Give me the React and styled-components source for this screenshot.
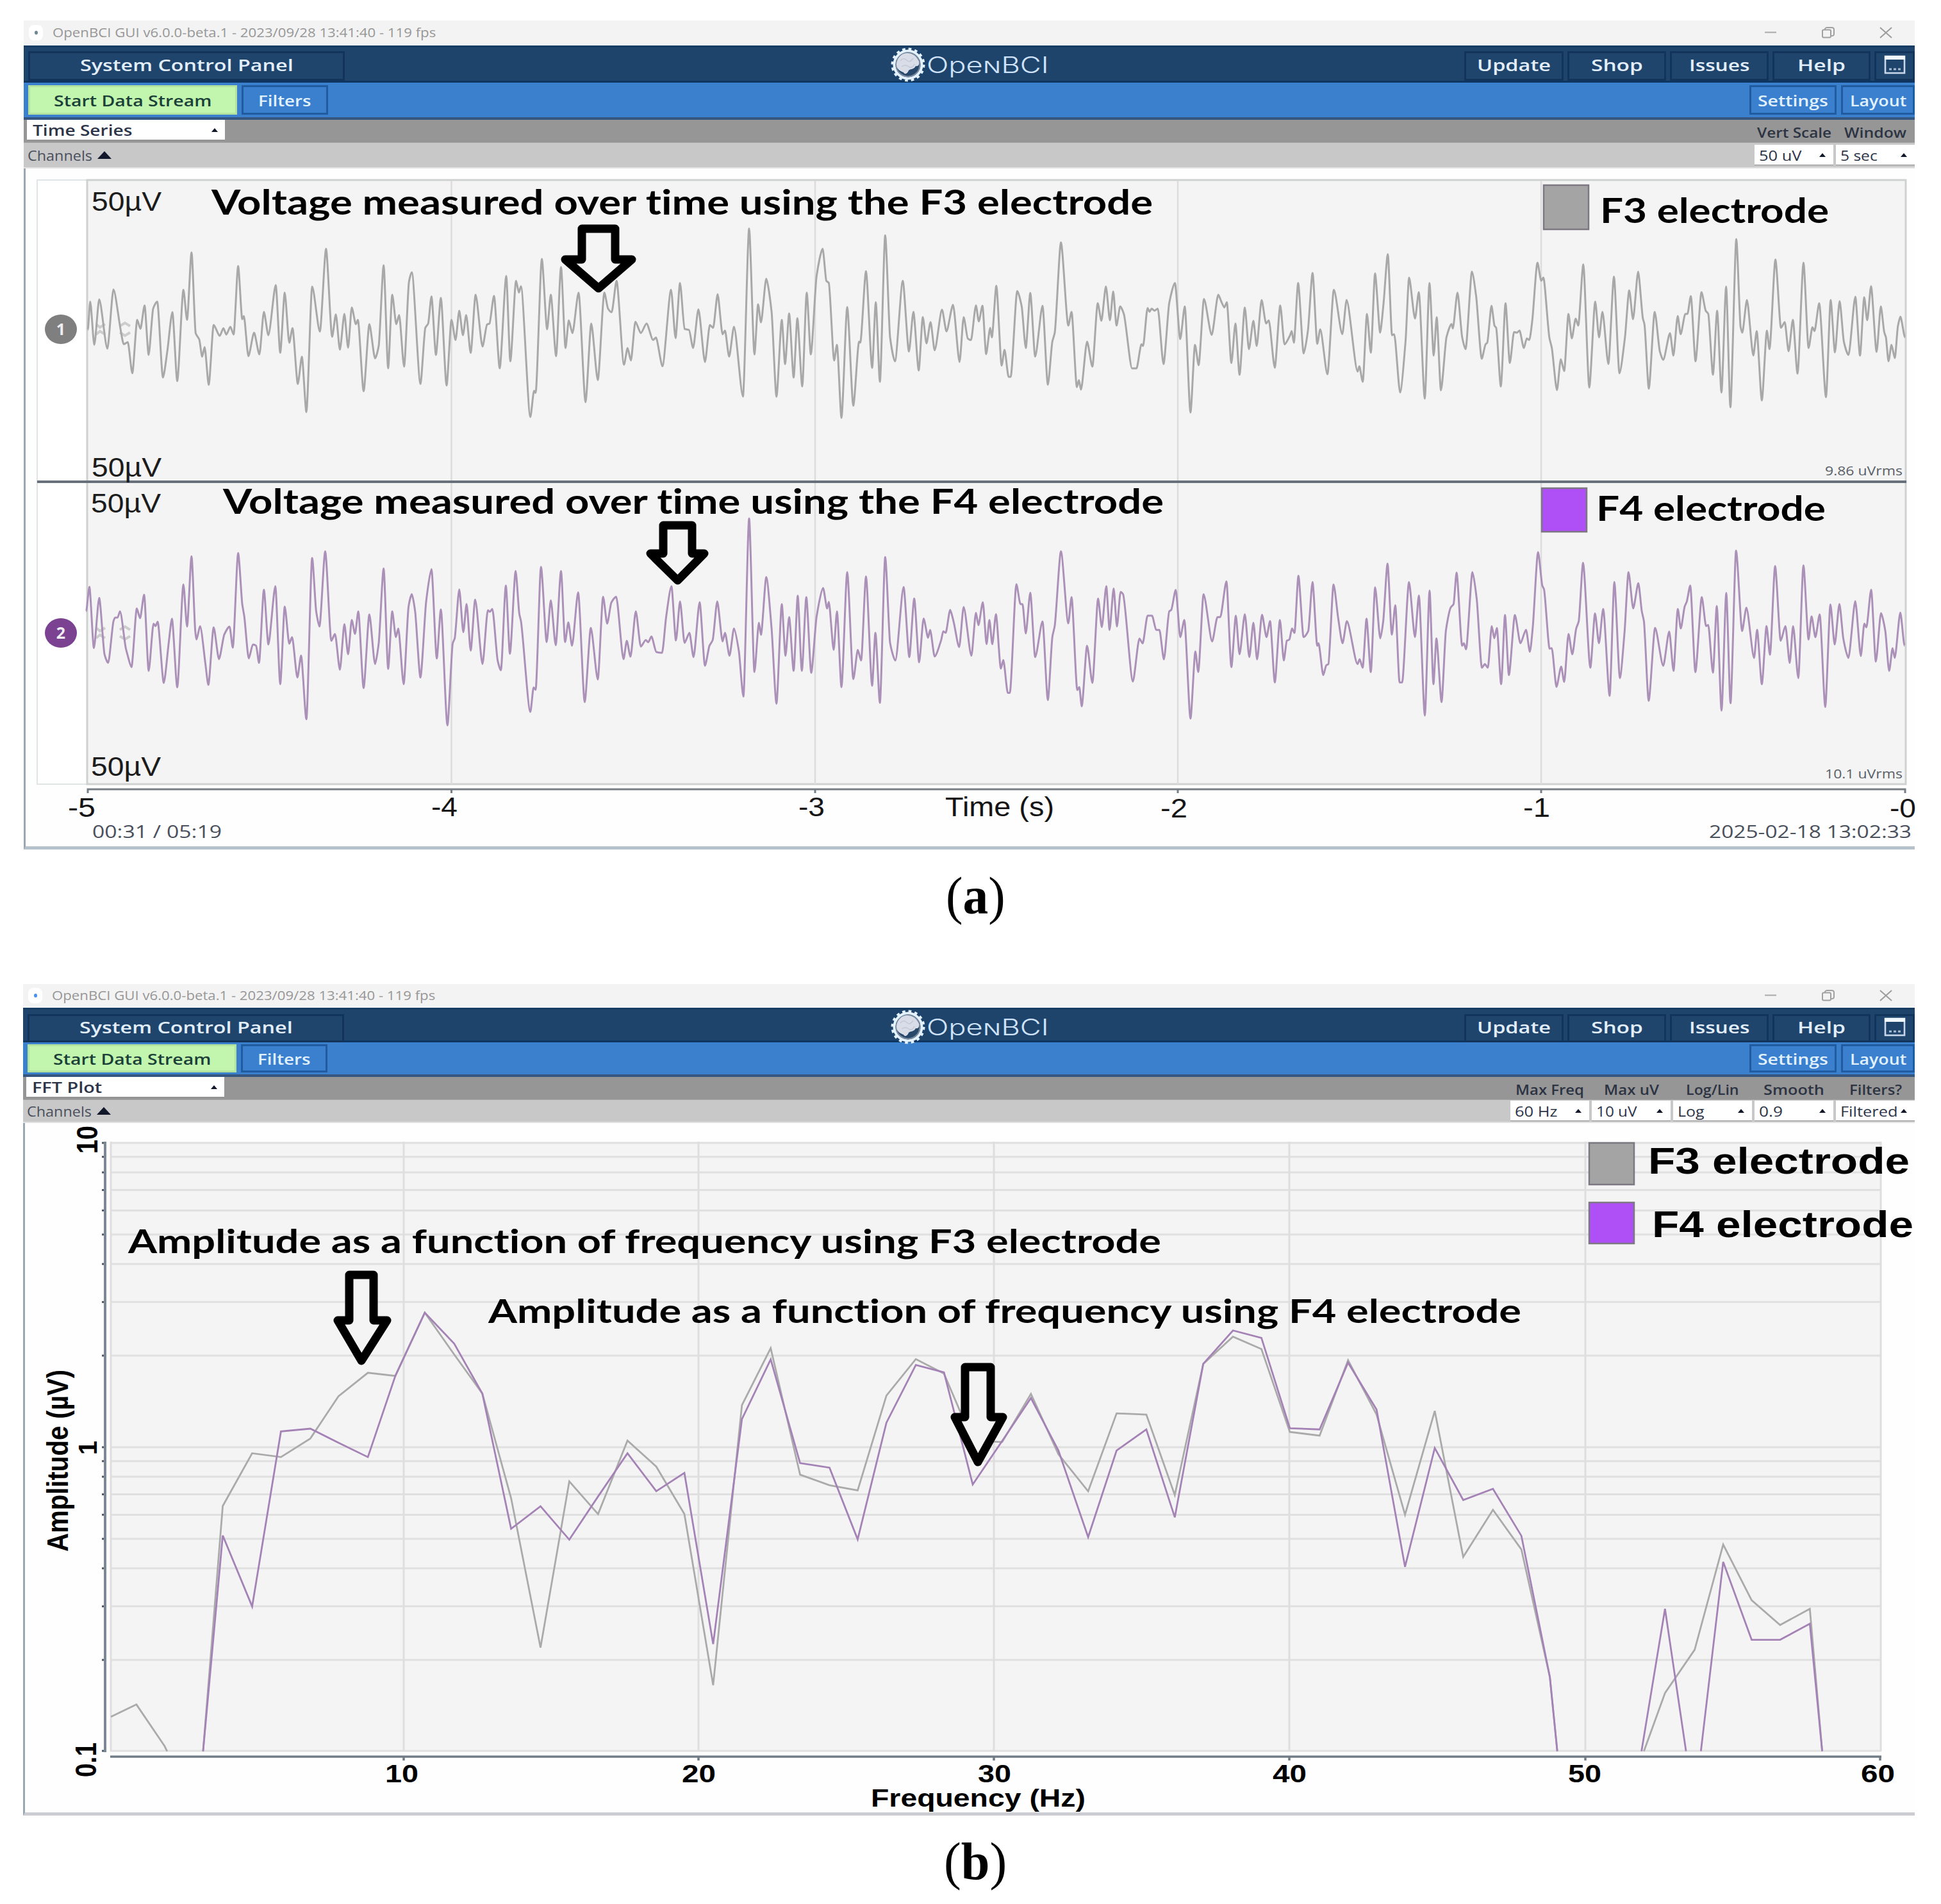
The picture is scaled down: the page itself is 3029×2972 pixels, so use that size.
import { useLayoutEffect, useRef, useState } from 'react';
import styled, { createGlobalStyle } from 'styled-components';

const GlobalStyle = createGlobalStyle`
    * {
        box-sizing: border-box;
    }

    body {
        margin: 0;
        background: #ffffff;
        font-family: 'Open Sans', 'Noto Sans', sans-serif;
    }
`;

const Page = styled.main`
    width: 3029px;
    height: 2972px;
    padding-top: 32px;
    overflow: hidden;
`;

const Figure = styled.figure`
    margin: 0;
    height: ${(props) => props.$height}px;
`;

const Caption = styled.figcaption`
    display: flex;
    justify-content: center;
    padding-top: ${(props) => props.$top}px;
    padding-left: 15px;
    font-family: 'Liberation Serif', serif;
    font-size: 82px;
    line-height: 90px;
    color: #000000;
`;

const Window = styled.section`
    width: ${(props) => 2988 - props.$left}px;
    margin-left: ${(props) => props.$left}px;
`;

const TitleBar = styled.header`
    display: flex;
    align-items: center;
    height: ${(props) => props.$height}px;
    padding: 0 35px 2px 8px;
    background: #f3f3f3;
    color: #979797;
    font-size: 20px;
`;

const AppDot = styled.span`
    display: grid;
    place-items: center;
    width: 22px;
    height: 24px;
    margin-right: 15px;
    border-radius: 8px;
    background: #ffffff;

    &::after {
        content: '';
        width: 5px;
        height: 6px;
        border-radius: 50%;
        background: ${(props) => props.$color};
    }
`;

const WindowButtons = styled.div`
    display: flex;
    align-items: center;
    gap: 70px;
    margin-left: auto;
`;

const NavBar = styled.nav`
    display: grid;
    grid-template-columns: 1fr auto 1fr;
    align-items: center;
    height: ${(props) => props.$height}px;
    padding-left: 7px;
    background: #1f446b;
    border-top: 3px solid #173c62;
    border-bottom: 3px solid #0e3660;
    color: #e3eefb;
    font-size: 26px;
    font-weight: 600;
`;

const NavGroup = styled.div`
    display: flex;
    justify-content: flex-end;
    gap: 6px;
`;

const NavButton = styled.button`
    display: flex;
    align-items: center;
    justify-content: center;
    width: ${(props) => props.$width}px;
    height: ${(props) => props.$height}px;
    padding: 0 0 4px;
    border: 3px solid #12345a;
    background: #20456d;
    color: inherit;
    font: inherit;
`;

const Logo = styled.div`
    display: flex;
    align-items: center;
    gap: 1px;
    padding-right: 7px;
    padding-bottom: 3px;
    color: #cfe3fa;
    font-family: Inter, sans-serif;
    font-size: 35px;
    font-weight: 300;
    font-variant: small-caps;
    line-height: 46px;
`;

const ToolBar = styled.div`
    display: flex;
    align-items: center;
    gap: 7px;
    height: ${(props) => props.$height}px;
    padding-left: 7px;
    background: #3a80cc;
    border-bottom: 4px solid #34567f;
`;

const ToolButton = styled.button`
    display: flex;
    align-items: center;
    justify-content: center;
    width: ${(props) => props.$width}px;
    height: ${(props) => props.$height}px;
    margin-left: ${(props) => (props.$push ? 'auto' : 0)};
    padding: 0;
    border: 3px solid ${(props) => (props.$primary ? '#b3e39f' : '#205b9f')};
    background: ${(props) => (props.$primary ? '#c2f6af' : '#3a80cf')};
    color: ${(props) => (props.$primary ? '#1b4038' : '#e2f1ff')};
    font: 600 24px 'Open Sans', sans-serif;
`;

const WidgetBar = styled.div`
    display: flex;
    height: 36px;
    padding-left: 5px;
    background: #969696;
    border-bottom: 1px solid #a4a4a4;
`;

const SubBar = styled.div`
    display: flex;
    align-items: center;
    height: ${(props) => props.$height}px;
    padding-left: 6px;
    background: #c8c8c8;
    border-bottom: 2px solid #e2e2e2;
    color: #494f5c;
    font-size: 22px;
`;

const Select = styled.div`
    display: flex;
    align-items: center;
    justify-content: space-between;
    width: ${(props) => props.$width}px;
    height: ${(props) => props.$height}px;
    padding: 0 ${(props) => (props.$main ? 11 : 12)}px 0 ${(props) => (props.$main ? 9 : 7)}px;
    background: #ffffff;
    border-bottom: 1px solid #8d8d8d;
    color: #2c3448;
    font-size: ${(props) => (props.$main ? 23 : 22)}px;
    font-weight: ${(props) => (props.$main ? 600 : 500)};
`;

const Columns = styled.div`
    display: flex;
    align-items: center;
    gap: 4px;
    height: 100%;
    margin-left: auto;
`;

const ColumnLabel = styled.div`
    display: flex;
    justify-content: center;
    width: 123px;
    padding-top: 5px;
    color: #2c3342;
    font-size: 21px;
    font-weight: 600;
`;

const Caret = styled.i`
    flex: none;
    width: 0;
    height: 0;
    margin-left: ${(props) => props.$gap || 0}px;
    border: solid transparent;
    border-width: 0 ${(props) => props.$size}px ${(props) => props.$size + 1}px;
    border-bottom-color: #10182a;
`;

const Content = styled.div`
    height: ${(props) => props.$height}px;
    background: #fefefe;
    border-left: 3px solid #9aa6b4;
    border-bottom: 5px solid ${(props) => props.$edge};
`;

const Chart = styled.svg`
    display: block;
    width: 100%;
    height: 100%;
    overflow: visible;
    font-variant-ligatures: none;
`;

const FitBox = styled.span`
    display: block;
    flex: none;
    width: ${(props) => props.$width}px;
    text-align: left;
    white-space: nowrap;
`;

const FitText = styled.span`
    display: inline-block;
    transform-origin: left center;
`;

// stretches its text to an exact width, whatever the font's own metrics are
const Fit = ({ width, children }) => {
    const ref = useRef(null);
    const [scale, setScale] = useState(1);

    useLayoutEffect(() => {
        setScale(width / ref.current.offsetWidth);
    }, [width]);

    return (
        <FitBox $width={width}>
            <FitText ref={ref} style={{ transform: `scaleX(${scale})` }}>
                {children}
            </FitText>
        </FitBox>
    );
};

// Each trace is digitised in chunks: origin, scale and "x,y" pairs.
const toPoints = (chunks) =>
    chunks.flatMap(({ x0, y0, kx, ky, data }) =>
        data
            .trim()
            .split(/\s+/)
            .map((pair) => {
                const [x, y] = pair.split(',').map(Number);
                return [x0 + x / kx, y0 + y / ky];
            })
    );

const toLine = (chunks) =>
    toPoints(chunks)
        .map(([x, y]) => `${x.toFixed(1)},${y.toFixed(1)}`)
        .join(' ');

// flat tangent on the peaks, mean slope everywhere else
const toWave = (chunks) => {
    const points = toPoints(chunks);
    const slopes = points.map(([x, y], i) => {
        const prev = points[i - 1];
        const next = points[i + 1];

        if (!prev || !next || (y - prev[1]) * (next[1] - y) <= 0) return 0;

        const a = (y - prev[1]) / (x - prev[0]);
        const b = (next[1] - y) / (next[0] - x);

        return (2 * a * b) / (a + b);
    });

    return points
        .map(([x, y], i) => {
            if (i === 0) return `M${x.toFixed(1)} ${y.toFixed(1)}`;

            const [px, py] = points[i - 1];
            const h = (x - px) * 0.24;

            return (
                `C${(px + h).toFixed(1)} ${(py + slopes[i - 1] * h).toFixed(1)} ` +
                `${(x - h).toFixed(1)} ${(y - slopes[i] * h).toFixed(1)} ${x.toFixed(1)} ${y.toFixed(1)}`
            );
        })
        .join('');
};

const F3_TRACE = [
    {
        x0: 40, y0: 260, kx: 1.568, ky: 3,
        data: `152,765 158,632 168,835 180,622 200,853 215,575 232,760 240,832 250,822 261,968 273,718 281,760
        291,650 301,882 312,665 322,632 336,988 347,860 359,682 371,1005 386,577 395,718 406,402 416,780 425,810
        432,890 438,845 448,1022 460,742 475,793 484,757 491,787 501,750 509,787 520,466 530,715 534,700 545,888
        559,778 572,880 583,680 594,790 612,555 623,872 634,590 645,825 653,757 666,1018 676,890 687,1150 701,562
        720,773 735,385 750,797 759,692 769,857 780,690 789,848 798,660 808,738 813,718 827,1052 841,738 855,898
        864,840 876,462 887,945 897,600 907,738 914,695 926,937 938,540 945,495 966,1018 978,755 985,735 993,608
        1004,882 1016,615 1030,1025 1042,718 1052,812 1061,675 1070,790 1078,695 1089,872 1101,600 1118,843
        1129,740 1135,735 1146,605 1160,945 1176,512 1186,912 1200,535 1207,590 1212,560 1235,1173 1244,1050
        1248,1060 1263,432 1276,762 1285,600 1298,888 1310,470 1321,850 1329,720 1338,780 1353,590 1370,1103
        1384,735 1400,1000 1416,590 1425,665 1434,682 1446,535 1464,928 1473,850 1481,908 1492,727`,
    },
    {
        x0: 1000, y0: 260, kx: 1.568, ky: 3,
        data: `0,780 14,735 30,812 37,800 53,935 74,577 85,803 96,545 107,760 118,765 128,850 141,668 157,915
        169,742 177,755 188,598 200,785 206,768 216,890 228,750 250,1077 265,290 278,880 287,645 294,730 307,525
        320,680 332,1078 345,718 353,925 363,688 374,988 383,710 395,1030 406,590 416,880 430,515 445,385 454,535
        460,545 473,908 480,835 491,1177 505,658 520,1120 534,820 537,825 551,490 566,943 575,635 585,1008 598,322
        610,800 622,912 641,535 656,866 667,680 680,955 690,705 699,828 709,728 719,860 737,670 748,772 764,647
        780,915 790,705 800,805 808,812 820,650 827,725 836,652 845,878 855,755 859,800 870,558 883,932 890,858
        900,985 905,985 921,583 932,655 942,850 953,592 965,890 983,652 996,1022 1007,820 1013,778 1028,355
        1046,745 1054,680 1067,1033 1072,1000 1077,1045 1092,820 1105,937 1118,640 1127,722 1138,562 1148,720
        1156,585 1164,745 1173,655 1182,690 1202,945 1213,945 1225,832 1229,840 1240,662 1245,680 1250,665
        1257,675 1265,665 1279,925 1293,640 1307,545 1320,808 1331,655 1345,1152 1356,835 1365,930 1378,620
        1397,788 1413,600 1420,630 1428,660 1434,635 1445,920 1455,735 1465,975 1478,660 1488,855 1499,722
        1507,840 1519,625 1530,735`,
    },
    {
        x0: 1980, y0: 260, kx: 1.5077, ky: 3,
        data: `0,720 14,942 27,650 37,833 50,790 54,770 59,825 69,545 82,875 92,770 103,498 114,830 121,762
        138,973 153,577 173,785 183,625 209,960 213,935 221,1008 231,690 240,872 250,500 262,778 270,640 280,410
        290,790 295,785 309,1058 322,810 330,520 344,712 353,588 367,1087 378,545 388,885 395,705 405,1048 418,800
        430,737 433,758 444,590 455,800 463,855 478,492 488,610 501,900 510,832 514,825 524,652 531,745 535,755
        546,1030 557,640 567,920 577,775 584,778 590,768 600,850 607,805 613,812 620,720 632,450 641,535 646,520
        660,800 666,850 678,1047 687,902 695,958 705,690 713,805 722,712 728,745 740,458 754,1035 768,632 777,800
        785,680 799,925 812,515 825,968 838,800 848,580 857,715 869,492 880,710 884,740 894,1040 908,680 920,865
        928,905 944,780 952,885 962,700 969,785 980,690 985,690 993,607 1004,912 1018,588 1028,675 1034,690
        1045,975 1055,675 1065,1058 1076,562 1086,1127 1100,340 1110,750 1114,778 1125,625 1140,885 1148,770
        1160,1095 1172,768 1178,855 1192,435 1205,755 1214,728 1223,865 1233,718 1244,970 1258,450 1270,850
        1279,752 1284,770 1295,640 1311,1080 1322,625 1332,870 1343,630 1353,820 1364,882 1380,610 1391,885
        1401,612 1408,720 1417,560 1430,868 1440,655 1448,775 1452,800 1458,912 1465,835 1473,897 1480,750
        1486,703 1497,800`,
    },
];

const F4_TRACE = [
    {
        x0: 40, y0: 740, kx: 1.568, ky: 2.613,
        data: `148,560 156,460 167,710 180,505 193,735 202,770 215,600 219,585 225,585 231,560 245,710 249,735
        259,787 272,548 280,588 290,492 301,803 313,610 318,620 323,602 338,852 350,690 358,590 371,870 386,450
        395,622 406,335 415,640 418,675 427,620 440,775 447,860 460,625 473,755 486,655 499,622 507,708 520,322
        530,530 535,580 546,752 556,695 564,700 571,770 583,472 594,695 611,457 623,857 634,540 645,692 652,665
        665,830 674,740 687,1000 701,342 711,560 719,622 733,315 748,680 757,652 769,798 780,612 789,735 798,595
        806,652 814,560 827,873 841,572 855,775 864,690 876,385 887,795 897,560 906,665 912,630 925,857 937,540
        945,490 953,560 966,830 980,520 993,388 1006,752 1016,552 1032,1025 1045,690 1050,670 1061,470 1071,645
        1079,530 1089,720 1100,512 1118,775 1131,555 1136,562 1142,550 1155,760 1163,800 1175,455 1185,733
        1199,395 1208,570 1212,600 1235,970 1243,870 1248,880 1261,378 1275,685 1285,515 1297,698 1310,395
        1320,685 1328,605 1337,700 1352,482 1368,930 1383,627 1400,838 1413,500 1423,610 1433,525 1445,500
        1463,755 1471,680 1480,745 1493,560`,
    },
    {
        x0: 1000, y0: 740, kx: 1.568, ky: 2.24,
        data: `0,603 12,580 18,588 26,568 38,622 52,625 62,500 75,392 86,582 96,445 107,590 119,555 129,640
        144,448 157,670 168,600 176,580 187,445 200,585 206,555 217,635 228,540 240,620 251,778 265,155 278,692
        289,520 294,562 307,360 320,540 332,803 345,455 354,635 363,500 374,688 384,425 394,688 405,430 417,695
        430,500 446,398 456,470 460,447 472,615 480,480 491,745 505,343 520,717 531,615 539,652 551,358 566,740
        574,555 585,800 598,290 610,590 623,652 643,395 657,640 669,435 681,658 692,505 703,572 708,545 719,638
        735,580 740,550 746,555 757,475 766,520 779,605 790,465 809,635 820,485 826,528 837,448 846,595 853,510
        860,595 869,490 881,680 887,650 898,765 903,765 919,385 929,455 934,455 942,557 953,415 965,640 983,515
        996,790 1007,570 1013,530 1028,270 1046,522 1054,430 1068,755 1073,745 1079,812 1092,600 1105,730
        1119,435 1128,535 1139,392 1147,545 1157,400 1165,533 1174,412 1180,420 1204,725 1220,575 1228,592
        1240,495 1251,495 1261,545 1269,545 1280,648 1293,480 1298,475 1309,405 1320,570 1330,510 1345,855
        1357,620 1364,692 1377,420 1398,585 1411,500 1418,500 1433,375 1445,675 1456,495 1465,630 1478,490
        1489,640 1499,520 1508,648 1520,492 1531,570`,
    },
    {
        x0: 1980, y0: 740, kx: 1.4947, ky: 2.613,
        data: `3,600 14,850 26,595 35,760 42,680 48,675 54,630 60,648 69,415 81,665 92,640 102,440 113,700
        116,690 127,820 134,780 139,775 151,450 162,590 172,690 182,600 207,775 212,755 219,790 228,590 238,808
        248,462 260,670 267,600 277,365 287,655 295,535 305,850 311,850 327,440 341,665 350,495 364,985 375,475
        384,857 391,670 403,930 413,640 424,545 431,530 438,402 451,700 455,690 460,715 475,400 485,510 497,790
        504,775 511,790 520,620 526,670 532,628 542,857 551,575 560,820 574,575 587,690 600,635 609,725 616,620
        628,318 638,455 642,470 655,712 660,710 671,868 682,785 689,848 699,652 708,735 717,630 723,600 733,362
        750,790 761,568 770,690 780,550 795,905 806,440 819,832 830,640 839,400 850,548 862,445 870,560 875,600
        886,925 901,627 920,782 934,642 944,803 954,550 961,630 970,540 975,520 983,455 995,808 1010,502 1020,620
        1025,615 1036,810 1045,538 1056,965 1067,485 1077,935 1090,312 1104,640 1114,545 1132,750 1139,635
        1150,857 1161,620 1169,737 1181,375 1194,680 1205,620 1215,770 1223,620 1235,832 1247,372 1259,675
        1266,580 1275,665 1285,572 1298,950 1310,532 1320,695 1331,530 1340,670 1352,750 1368,518 1381,742
        1389,610 1394,625 1405,472 1416,765 1428,567 1438,640 1447,803 1455,710 1460,750 1473,565 1483,700`,
    },
];

const LOW = { x0: 20, y0: 2100, kx: 0.98, ky: 1.823 };
const HIGH = { x0: 0, y0: 0, kx: 0.51765, ky: 0.51765 };

// one entry per visible run, the gaps are below 0.1 uV
const F3_SPECTRUM = [
    [{ ...LOW, data: '150,1057 189,1022 232,1140 236,1155' }],
    [
        {
            ...LOW,
            data: `291,1155 321,457 366,307 410,318 455,265 498,145 543,78 585,87 630,-93 675,26 718,137 762,435
            807,860 851,387 895,480 940,271 984,345 1027,480 1071,967 1115,170 1159,8 1204,368 1249,398 1292,413
            1336,143 1381,39 1424,80 1468,272 1513,275 1557,138`,
        },
        {
            ...HIGH,
            data: `855,1175 879,1205 902,1142 926,1143 949,1208 972,1102 996,1080 1019,1090 1042,1157 1066,1160
            1089,1099 1112,1143 1135,1224 1159,1140 1182,1258 1206,1220 1229,1252 1252,1355 1258,1415`,
        },
    ],
    [{ ...HIGH, data: '1328,1415 1345,1368 1369,1333 1392,1248 1415,1293 1438,1313 1462,1300 1472,1415' }],
];

const F4_SPECTRUM = [
    [
        {
            ...LOW,
            data: `291,1155 321,541 366,743 410,245 455,237 498,277 543,318 585,87 630,-93 675,-5 718,137 762,522
            807,458 851,553 895,430 940,307 984,415 1027,363 1071,850 1115,210 1159,40 1204,335 1249,348 1292,552
            1336,220 1381,56 1424,77 1468,396 1513,272 1557,150`,
        },
        {
            ...HIGH,
            data: `855,1172 879,1242 902,1172 926,1155 949,1226 972,1102 996,1075 1019,1081 1042,1154 1066,1155
            1089,1101 1112,1139 1135,1266 1159,1170 1182,1212 1206,1203 1229,1241 1252,1355 1258,1415`,
        },
    ],
    [{ ...HIGH, data: '1326,1415 1345,1300 1362,1415' }],
    [{ ...HIGH, data: '1374,1415 1392,1262 1415,1325 1438,1325 1462,1312 1472,1415' }],
];

const SANS = "'Liberation Sans', Arial, sans-serif";
const NOTE = 'Lato, Carlito, sans-serif';
const GUI = "'Open Sans', sans-serif";

const Text = ({ x1, x2, y, size, font = SANS, weight = 400, fill = '#000000', children }) => (
    <text
        x={x1}
        y={y}
        fontFamily={font}
        fontSize={size}
        fontWeight={weight}
        fill={fill}
        textLength={x2 - x1}
        lengthAdjust="spacingAndGlyphs"
    >
        {children}
    </text>
);

const Note = styled(Text).attrs({ font: NOTE, weight: 700 })``;

// text that reads upwards, from y1 (bottom) to y2 (top), x is its baseline
const UpText = ({ x, y1, y2, size, children }) => (
    <g transform={`translate(${x} ${y1}) rotate(-90)`}>
        <Text x1={0} x2={y1 - y2} y={0} size={size} weight={700}>
            {children}
        </Text>
    </g>
);

const Arrow = ({ left, right, top, headLeft, headRight, headTop, tip }) => (
    <path
        d={`M${left} ${top}H${right}V${headTop}H${headRight}L${(left + right) / 2} ${tip}L${headLeft} ${headTop}H${left}Z`}
        fill="#f4f4f4"
        stroke="#000000"
        strokeWidth="13"
        strokeLinejoin="round"
    />
);

const Swatch = ({ x, y, height, fill }) => (
    <rect x={x + 1} y={y + 1} width="70" height={height - 2} fill={fill} stroke="#7c7780" strokeWidth="2.5" />
);

const Badge = ({ y, fill, children }) => (
    <g>
        <ellipse cx="95" cy={y} rx="25" ry="23" fill={fill} />
        <text
            x="95"
            y={y + 9}
            textAnchor="middle"
            fontFamily={GUI}
            fontSize="25"
            fontWeight="700"
            fill="#f1eef3"
        >
            {children}
        </text>
        <g stroke="#bdbdbd" strokeWidth="4" fill="none" opacity="0.7">
            <path d={`M150 ${y - 8}l6 5l8 -5M150 ${y + 8}l6 -5l8 5`} />
            <path d={`M187 ${y - 5}l8 -5l8 5M187 ${y + 5}l8 5l8 -5`} />
        </g>
    </g>
);

const TimeSeriesChart = () => (
    <Chart viewBox="40 263 2948 1058" preserveAspectRatio="none">
        <rect x="58" y="281" width="78" height="943" fill="#ffffff" stroke="#dfe4e6" strokeWidth="2" />
        <rect x="136" y="281" width="2838" height="943" fill="#f4f4f4" stroke="#cfd1d1" strokeWidth="3" />
        {[704.5, 1272, 1838, 2405].map((x) => (
            <line key={x} x1={x} x2={x} y1="282" y2="1224" stroke="#dcdcdc" strokeWidth="2.5" />
        ))}
        <Badge y={514} fill="#7f7f7f">1</Badge>
        <Badge y={988} fill="#7b4292">2</Badge>
        <path d={toWave(F3_TRACE)} fill="none" stroke="#a8a8a8" strokeWidth="3" />
        <path d={toWave(F4_TRACE)} fill="none" stroke="#ab90b8" strokeWidth="3" />
        <line x1="58" x2="2975" y1="752" y2="752" stroke="#68717b" strokeWidth="4" />
        <path d="M137 1238V1232H2973V1238M704.5 1232v6M1272 1232v6M1838 1232v6M2405 1232v6" fill="none" stroke="#767d83" strokeWidth="3" />

        <Text x1={143} x2={252} y={329} size={43} fill="#1c1c1c">50µV</Text>
        <Text x1={143} x2={252} y={744} size={43} fill="#1c1c1c">50µV</Text>
        <Text x1={142} x2={251} y={800} size={43} fill="#1c1c1c">50µV</Text>
        <Text x1={142} x2={251} y={1211} size={43} fill="#1c1c1c">50µV</Text>
        <Text x1={2848} x2={2969} y={742} size={20} font={GUI} fill="#596068">9.86 uVrms</Text>
        <Text x1={2848} x2={2969} y={1215} size={20} font={GUI} fill="#596068">10.1 uVrms</Text>

        <Note x1={330} x2={1799} y={335} size={54}>
            Voltage measured over time using the F3 electrode
        </Note>
        <Note x1={348} x2={1816} y={802} size={53}>
            Voltage measured over time using the F4 electrode
        </Note>
        <Arrow left={908} right={960} top={357} headLeft={882} headRight={986} headTop={405} tip={450} />
        <Arrow left={1035} right={1080} top={820} headLeft={1015} headRight={1099} headTop={864} tip={906} />
        <Swatch x={2408} y={288} height={71} fill="#a4a4a4" />
        <Note x1={2497} x2={2854} y={348} size={54}>F3 electrode</Note>
        <Swatch x={2405} y={761} height={70} fill="#ae50f5" />
        <Note x1={2491} x2={2849} y={813} size={53}>F4 electrode</Note>

        <Text x1={106} x2={149} y={1275} size={42} fill="#151515">-5</Text>
        <Text x1={673} x2={714} y={1274} size={42} fill="#151515">-4</Text>
        <Text x1={1246} x2={1287} y={1274} size={42} fill="#151515">-3</Text>
        <Text x1={1475} x2={1645} y={1274} size={42} fill="#151515">Time (s)</Text>
        <Text x1={1811} x2={1853} y={1276} size={42} fill="#151515">-2</Text>
        <Text x1={2377} x2={2419} y={1275} size={42} fill="#151515">-1</Text>
        <Text x1={2949} x2={2990} y={1276} size={42} fill="#151515">-0</Text>
        <Text x1={144} x2={346} y={1308} size={28} font={GUI} weight={500} fill="#4a505c">00:31 / 05:19</Text>
        <Text x1={2667} x2={2983} y={1308} size={28} font={GUI} weight={500} fill="#4a505c">2025-02-18 13:02:33</Text>
    </Chart>
);

const PLOT_TOP = 1784;
const DECADE = 475;

const logLines = [0, 1].flatMap((decade) =>
    [10, 9, 8, 7, 6, 5, 4, 3, 2].map((k) => PLOT_TOP + DECADE * (decade + 1 - Math.log10(k)))
);

const FftChart = () => (
    <Chart viewBox="39 1753 2949 1076" preserveAspectRatio="none">
        <rect x="172" y="1782" width="2763" height="952" fill="#f4f4f4" />
        {[...logLines, 2733].map((y) => (
            <g key={y}>
                <line x1="172" x2="2935" y1={y} y2={y} stroke="#e0e0e0" strokeWidth="3" />
                <line x1="159" x2="164" y1={y} y2={y} stroke="#4c5866" strokeWidth="3" />
            </g>
        ))}
        {[173, 630, 1090, 1551, 2012, 2474, 2935].map((x) => (
            <line key={x} x1={x} x2={x} y1="1782" y2="2734" stroke="#dedede" strokeWidth="3" />
        ))}
        <line x1="164" x2="164" y1="1782" y2="2735" stroke="#7d8896" strokeWidth="4" />
        <path d="M172 2742H2936M630 2742v6M1090 2742v6M1551 2742v6M2012 2742v6M2474 2742v6M2934 2742v6" fill="none" stroke="#717c86" strokeWidth="3.5" />

        {F3_SPECTRUM.map((run, i) => (
            <polyline key={i} points={toLine(run)} fill="none" stroke="#aaaaaa" strokeWidth="2.8" />
        ))}
        {F4_SPECTRUM.map((run, i) => (
            <polyline key={i} points={toLine(run)} fill="none" stroke="#a482b6" strokeWidth="2.8" />
        ))}

        <Note x1={200} x2={1812} y={1956} size={52}>
            Amplitude as a function of frequency using F3 electrode
        </Note>
        <Note x1={762} x2={2374} y={2065} size={52}>
            Amplitude as a function of frequency using F4 electrode
        </Note>
        <Arrow left={545} right={583} top={1990} headLeft={527} headRight={604} headTop={2061} tip={2124} />
        <Arrow left={1506} right={1546} top={2134} headLeft={1490} headRight={1565} headTop={2212} tip={2282} />
        <Swatch x={2479} y={1783} height={67} fill="#a4a4a4" />
        <Text x1={2572} x2={2980} y={1832} size={57} weight={700}>F3 electrode</Text>
        <Swatch x={2479} y={1876} height={66} fill="#ae50f5" />
        <Text x1={2578} x2={2986} y={1931} size={57} weight={700}>F4 electrode</Text>

        <UpText x={152} y1={1801} y2={1757} size={46}>10</UpText>
        <UpText x={151} y1={2271} y2={2249} size={40}>1</UpText>
        <UpText x={150} y1={2774} y2={2720} size={46}>0.1</UpText>
        <UpText x={106} y1={2422} y2={2138} size={46}>Amplitude (µV)</UpText>

        <Text x1={601} x2={653} y={2782} size={39} weight={700}>10</Text>
        <Text x1={1064} x2={1117} y={2782} size={39} weight={700}>20</Text>
        <Text x1={1526} x2={1578} y={2782} size={39} weight={700}>30</Text>
        <Text x1={1986} x2={2039} y={2782} size={39} weight={700}>40</Text>
        <Text x1={2447} x2={2499} y={2782} size={39} weight={700}>50</Text>
        <Text x1={2904} x2={2957} y={2782} size={39} weight={700}>60</Text>
        <Text x1={1359} x2={1694} y={2820} size={38} weight={700}>Frequency (Hz)</Text>
    </Chart>
);

const GearIcon = () => (
    <svg width="56" height="54" viewBox="-28 -27 56 54">
        <circle r="21.5" fill="#28486b" stroke="#e4f2ff" strokeWidth="4" />
        <circle r="24.5" fill="none" stroke="#e4f2ff" strokeWidth="4" strokeDasharray="4.6 5.02" />
        <circle r="18.5" fill="none" stroke="#7a8b9e" strokeWidth="2" />
        <path
            d="M-18 0C-18 -8 -12 -17 -3 -18C7 -19 14 -13 17 -5C18 0 16 3 12 2C9 8 4 6 1 9C-1 14 -5 16 -7 12C-12 10 -18 7 -18 0Z"
            fill="#d8dde8"
        />
        <path d="M-12 -6q5 -6 10 -1t10 -3M-10 3q6 -4 11 0t9 -4" fill="none" stroke="#c3c9d6" strokeWidth="1.5" />
    </svg>
);

const PanelIcon = () => (
    <svg width="34" height="30" viewBox="0 0 34 30">
        <rect x="2" y="2" width="30" height="26" fill="none" stroke="#c8d8ea" strokeWidth="2.6" />
        <rect x="1" y="1" width="32" height="6" fill="#f2f8ff" />
        <path d="M8 22h4M15 22h4M22 22h4" stroke="#a9bdd4" strokeWidth="3" />
    </svg>
);

const TitleButtons = () => (
    <WindowButtons>
        <svg width="20" height="18" viewBox="0 0 20 18">
            <path d="M1 8.5h18" stroke="#a9a9a9" strokeWidth="2" />
        </svg>
        <svg width="20" height="18" viewBox="0 0 20 18" fill="none" stroke="#a0a0a0" strokeWidth="2">
            <rect x="1" y="4.5" width="13" height="12" rx="2" />
            <path d="M5 4V3q1 -2 3 -2h7q4 0 4 3v7q0 3 -4 3" />
        </svg>
        <svg width="20" height="18" viewBox="0 0 20 18">
            <path d="M1 1l18 16M19 1L1 17" stroke="#9c9c9c" strokeWidth="2" />
        </svg>
    </WindowButtons>
);

const GuiWindow = (props) => {
    const {
        left,
        dot,
        edge,
        widget,
        widgetWidth,
        columns,
        sizes,
        children,
    } = props;

    return (
        <Window $left={left}>
            <TitleBar $height={sizes.title}>
                <AppDot $color={dot} />
                <Fit width={598}>OpenBCI GUI v6.0.0-beta.1 - 2023/09/28 13:41:40 - 119 fps</Fit>
                <TitleButtons />
            </TitleBar>
            <NavBar $height={sizes.nav}>
                <NavButton $width={494} $height={sizes.navButton}>
                    <Fit width={333}>System Control Panel</Fit>
                </NavButton>
                <Logo>
                    <GearIcon />
                    <Fit width={190}>OpenBCI</Fit>
                </Logo>
                <NavGroup>
                    <NavButton $width={155} $height={sizes.navButton}>
                        <Fit width={115}>Update</Fit>
                    </NavButton>
                    <NavButton $width={154} $height={sizes.navButton}>
                        <Fit width={81}>Shop</Fit>
                    </NavButton>
                    <NavButton $width={154} $height={sizes.navButton}>
                        <Fit width={94}>Issues</Fit>
                    </NavButton>
                    <NavButton $width={153} $height={sizes.navButton}>
                        <Fit width={75}>Help</Fit>
                    </NavButton>
                    <NavButton $width={63} $height={sizes.navButton}>
                        <PanelIcon />
                    </NavButton>
                </NavGroup>
            </NavBar>
            <ToolBar $height={sizes.tool}>
                <ToolButton $primary $width={326} $height={sizes.toolButton}>
                    <Fit width={247}>Start Data Stream</Fit>
                </ToolButton>
                <ToolButton $width={135} $height={sizes.toolButton}>
                    <Fit width={83}>Filters</Fit>
                </ToolButton>
                <ToolButton $push $width={136} $height={sizes.toolButton}>
                    <Fit width={110}>Settings</Fit>
                </ToolButton>
                <ToolButton $width={115} $height={sizes.toolButton}>
                    <Fit width={88}>Layout</Fit>
                </ToolButton>
            </ToolBar>
            <WidgetBar>
                <Select $main $width={309} $height={32}>
                    <Fit width={widgetWidth}>{widget}</Fit>
                    <Caret $size={5} />
                </Select>
                <Columns>
                    {columns.map((column) => (
                        <ColumnLabel key={column.label}>
                            <Fit width={column.labelWidth}>{column.label}</Fit>
                        </ColumnLabel>
                    ))}
                </Columns>
            </WidgetBar>
            <SubBar $height={sizes.sub}>
                <Fit width={101}>Channels</Fit>
                <Caret $size={11} $gap={8} />
                <Columns>
                    {columns.map((column) => (
                        <Select key={column.label} $width={123} $height={32}>
                            <Fit width={column.valueWidth}>{column.value}</Fit>
                            <Caret $size={5} />
                        </Select>
                    ))}
                </Columns>
            </SubBar>
            <Content $height={sizes.content} $edge={edge}>
                {children}
            </Content>
        </Window>
    );
};

const TIME_COLUMNS = [
    { label: 'Vert Scale', labelWidth: 116, value: '50 uV', valueWidth: 66 },
    { label: 'Window', labelWidth: 97, value: '5 sec', valueWidth: 58 },
];

const FFT_COLUMNS = [
    { label: 'Max Freq', labelWidth: 107, value: '60 Hz', valueWidth: 66 },
    { label: 'Max uV', labelWidth: 86, value: '10 uV', valueWidth: 63 },
    { label: 'Log/Lin', labelWidth: 83, value: 'Log', valueWidth: 42 },
    { label: 'Smooth', labelWidth: 95, value: '0.9', valueWidth: 37 },
    { label: 'Filters?', labelWidth: 82, value: 'Filtered', valueWidth: 89 },
];

const TIME_SIZES = { title: 39, nav: 58, navButton: 46, tool: 58, toolButton: 46, sub: 40, content: 1063 };
const FFT_SIZES = { title: 37, nav: 54, navButton: 44, tool: 54, toolButton: 44, sub: 36, content: 1081 };

export default function App() {
    return (
        <>
            <GlobalStyle />
            <Page>
                <Figure $height={1504}>
                    <GuiWindow
                        left={37}
                        dot="#6d8794"
                        edge="#b6c2cb"
                        widget="Time Series"
                        widgetWidth={155}
                        columns={TIME_COLUMNS}
                        sizes={TIME_SIZES}
                    >
                        <TimeSeriesChart />
                    </GuiWindow>
                    <Caption $top={28}>
                        <Fit width={93}>
                            (<b>a</b>)
                        </Fit>
                    </Caption>
                </Figure>
                <Figure $height={1436}>
                    <GuiWindow
                        left={36}
                        dot="#4a90f0"
                        edge="#cbcdd2"
                        widget="FFT Plot"
                        widgetWidth={109}
                        columns={FFT_COLUMNS}
                        sizes={FFT_SIZES}
                    >
                        <FftChart />
                    </GuiWindow>
                    <Caption $top={27}>
                        <Fit width={98}>
                            (<b>b</b>)
                        </Fit>
                    </Caption>
                </Figure>
            </Page>
        </>
    );
}
